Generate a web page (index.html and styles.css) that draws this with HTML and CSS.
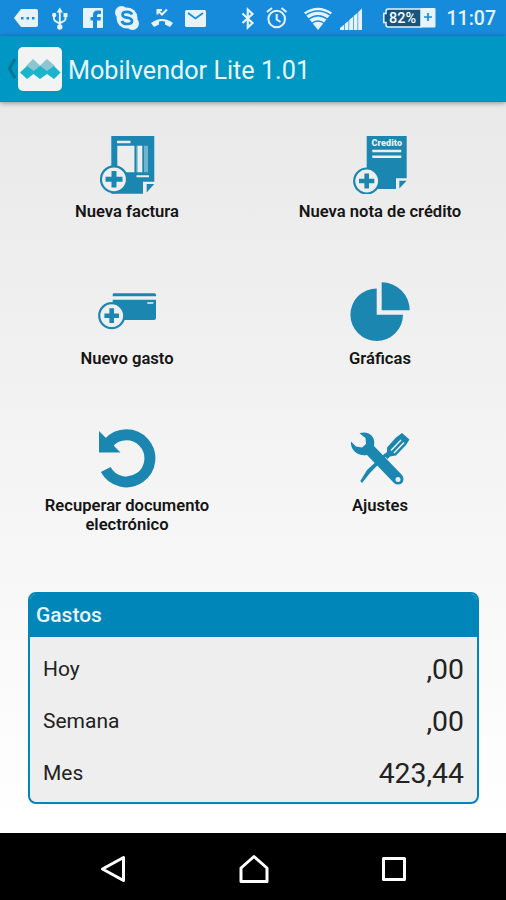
FILE: index.html
```
<!DOCTYPE html>
<html lang="es">
<head>
    <meta charset="UTF-8" />
    <meta name="viewport" content="width=device-width, initial-scale=1" />
    <title>Mobilvendor Lite</title>
    <link rel="stylesheet" href="styles.css">
</head>
<body>
    <div class="status-bar">
        <div class="status-left">
            <svg width="24" height="36" viewBox="14 0 24 36"><path fill="currentColor" d="M21 9H36Q38 9 38 11V25Q38 27 36 27H21L14 18Z"/><path class="cut" d="M21 17h2.500v2.500h-2.500zM26.500 17h2.500v2.500h-2.500zM32 17h2.500v2.500h-2.500z"/></svg>
            <svg width="17" height="36" viewBox="52 0 17 36" fill="none" stroke="currentColor" stroke-width="1.900"><path d="M59.800 11V27M54 15V19Q54 21 59.800 23.500M65.500 16V19Q65.500 21 59.800 23"/><path fill="currentColor" stroke="none" d="M56.500 12.500 59.800 7.500 63 12.500ZM63.500 13h4v4h-4z"/><circle cx="54.200" cy="15" r="2.200" fill="currentColor" stroke="none"/><circle cx="59.800" cy="27" r="2.700" fill="currentColor" stroke="none"/></svg>
            <svg width="20" height="36" viewBox="83 0 20 36"><rect x="83" y="8" width="20" height="20" rx="1" fill="currentColor"/><path class="cut" d="M93 28V20.500H90.500V17H93V15Q93 10.500 97.500 10.500H101V14H98.500Q97 14 97 15.500V17H101L100.500 20.500H97V28Z"/></svg>
            <svg width="24" height="36" viewBox="115 0 24 36"><g fill="currentColor"><circle cx="121.500" cy="12.500" r="6.500"/><circle cx="132.500" cy="23.500" r="6.500"/><circle cx="127" cy="18" r="10.500"/></g><path class="cut-line" d="M132 14.500Q131 11.800 127 11.800 122.500 11.800 122.500 14.500 122.500 17 127 17.700 132 18.500 132 21 132 24 127 24 122.800 24 121.800 21"/></svg>
            <svg width="22" height="36" viewBox="150 0 22 36"><path fill="currentColor" d="M150 23Q161 15 172 23L169 27 164 24.500V21.500Q161 20.500 158 21.500V24.500L153 27Z"/><path d="M156.500 14.500V10H161M157 10.500 161 14.500 166 9.500" fill="none" stroke="currentColor" stroke-width="2"/></svg>
            <svg width="21" height="36" viewBox="184 0 21 36"><rect x="184" y="10" width="21" height="17" rx="1.500" fill="currentColor"/><path class="cut-line thin" d="M187 13 194.500 18.500 202 13"/></svg>
        </div>
        <div class="status-right">
            <svg width="14" height="36" viewBox="241 0 14 36"><path d="M242.500 13.500 252.500 23 247.800 27.500V9.500L252.500 14 242.500 23" fill="none" stroke="currentColor" stroke-width="2.200"/></svg>
            <svg width="22" height="36" viewBox="265 0 22 36" fill="none" stroke="currentColor" stroke-width="2"><circle cx="275.700" cy="19" r="8.300"/><path d="M275.700 14V19.500L279.500 22M266 12 271 8M285.500 12 280.500 8"/></svg>
            <svg width="28" height="36" viewBox="303 0 28 36"><path fill="currentColor" d="M303 12.500Q317 3 331 12.500L317 30Z"/><path class="cut-line ring" d="M304 15.500Q317 6.500 330 15.500M307 19.500Q317 12 327 19.500M310.500 23.500Q317 18.500 323.500 23.500"/></svg>
            <svg width="22" height="36" viewBox="339 0 22 36"><path fill="currentColor" d="M339 30V28L343 24.800V30ZM343.700 30V24L347.500 20.800V30ZM348.200 30V20L352 16.800V30ZM352.700 30V16L356.500 12.800V30ZM357.200 30V12L361 8.500V30Z"/></svg>
            <svg width="53" height="36" viewBox="382 0 53 36"><path fill="#17557f" stroke="currentColor" stroke-width="1.500" d="M387 9H420V27H387Q385 27 385 24.500V22.500H382.800V13.500H385V11.500Q385 9 387 9Z"/><rect x="420" y="8" width="14.500" height="19.500" rx="1" fill="currentColor"/><path class="cut-line thin" d="M427 13V21M423 17H431"/><text class="battery-text" x="388" y="22.700" textLength="27" lengthAdjust="spacingAndGlyphs">82%</text></svg>
            <span class="clock">11:07</span>
        </div>
    </div>

    <header class="app-bar">
        <svg class="back" width="9" height="24" viewBox="0 0 9 24"><path d="M8 2 2.500 11.500 8 21" fill="none" stroke="#067493" stroke-width="3"/></svg>
        <div class="logo">
            <svg width="44" height="44" viewBox="0 0 44 44"><path fill="#8dc5d0" d="M8 19 15 12 22 18.500 29 12 37 19 29 26 22 20 15 26Z"/><path fill="#1bb5cb" d="M2 25.500 9 19 15.500 24 22 19 29 24 36 19 42.500 25.500 36 32 29 27 22 32 15.500 27 9 32Z"/></svg>
        </div>
        <h1>Mobilvendor Lite 1.01</h1>
    </header>

    <main>
        <div class="menu">
            <div class="menu-item">
                <svg class="icon" viewBox="0 0 60 60">
                    <path d="M14.300 2H57.300V59.700H14.300Z"/>
                    <path class="light" d="M20 6.700H33.500V9.300H20ZM20.300 11.700H37V38.300H20.300ZM40.300 11.700H45.300V38.300H40.300ZM39.500 41.200H52V43.200H39.500ZM46 47.700H58V60H46Z"/>
                    <path class="pale" d="M37 11.700H38V38.300H37ZM39.300 11.700H40.300V38.300H39.300ZM47 11.700H51V38.300H47Z"/>
                    <path d="M49.700 50H57.300L49.700 58.500Z"/>
                    <circle class="badge" cx="17" cy="45.300" r="13"/>
                    <path d="M14.500 37H19.500V42.800H25.500V47.800H19.500V53.600H14.500V47.800H8.500V42.800H14.500Z"/>
                </svg>
                <span>Nueva factura</span>
            </div>
            <div class="menu-item">
                <svg class="icon" viewBox="0 0 60 60">
                    <path d="M16.700 2H56.700V55H16.700Z"/>
                    <text class="credit-text" x="21.500" y="12.300" textLength="30.500">Credito</text>
                    <path class="light" d="M22.300 15.700H51.300V18.200H22.300ZM22.300 21.400H51.300V23.900H22.300ZM46 44.300H57V56H46Z"/>
                    <path d="M49.300 46.700H56.700L49.300 54.500Z"/>
                    <circle class="badge" cx="16.700" cy="47" r="12.500"/>
                    <path d="M14.400 39.500H19V44.700H24.300V49.300H19V54.500H14.400V49.300H9V44.700H14.400Z"/>
                </svg>
                <span>Nueva nota de crédito</span>
            </div>
            <div class="menu-item">
                <svg class="icon" viewBox="0 0 60 60">
                    <path d="M17 12.300H57.500Q59 12.300 59 13.800V15.300H15.700V13.600Q15.700 12.300 17 12.300ZM15.700 18.700H59V37Q59 39 57 39H15.700Z"/>
                    <path class="light" d="M50.300 21.200H56.300V22.800H50.300Z"/>
                    <circle class="badge" cx="14.700" cy="34.700" r="12.500"/>
                    <path d="M12.400 27.300H17V32.400H22V37H17V42.100H12.400V37H7.400V32.400H12.400Z"/>
                </svg>
                <span>Nuevo gasto</span>
            </div>
            <div class="menu-item">
                <svg class="icon" viewBox="0 0 60 60">
                    <path d="M26.700 7.400V33.700H53A26.300 26.300 0 1 1 26.700 7.400Z"/>
                    <path d="M31.700 1.300A28 28 0 0 1 59.700 29.300H31.700Z"/>
                </svg>
                <span>Gráficas</span>
            </div>
            <div class="menu-item">
                <svg class="icon" viewBox="0 0 60 60">
                    <path d="M8.700 41.500A23.500 23.500 0 1 0 11.700 14.900" fill="none" stroke="#1b87b1" stroke-width="11"/>
                    <path d="M2 3 23.500 24.500H2Z"/>
                </svg>
                <span>Recuperar documento electrónico</span>
            </div>
            <div class="menu-item">
                <svg class="icon" viewBox="0 0 60 60">
                    <path d="M10.300 53 17 42 35 25.500 37 27.500 20 45 12 55Z"/>
                    <path d="M52 5 59.500 11.500 56 17 46 27.500 40 28.500 37.500 31 33.500 27 37 24V19.500L46 9.500Z"/>
                    <path d="M41 22.500 51 12M44 25 54 14.500" fill="none" stroke="#f4f4f4" stroke-width="1.400"/>
                    <path d="M9.500 5.200C19 2.500 26 9 24 18L51.500 46.500C57 53 50 59.500 44 55L17 27C8 28.500 0 22 1 13.500L6 18.500 12 19.500 16 16 15.500 10Z"/>
                    <circle class="light" cx="48" cy="51.500" r="2.500"/>
                </svg>
                <span>Ajustes</span>
            </div>
        </div>

        <section class="expenses">
            <h2>Gastos</h2>
            <div class="row"><span>Hoy</span><span class="amount">,00</span></div>
            <div class="row"><span>Semana</span><span class="amount">,00</span></div>
            <div class="row"><span>Mes</span><span class="amount">423,44</span></div>
        </section>
    </main>

    <footer class="nav-bar">
        <svg width="26" height="30" viewBox="0 0 26 30"><path d="M23.500 3.500V26.500L2.500 15Z"/></svg>
        <svg width="30" height="30" viewBox="0 0 30 30"><path d="M15 2.500 28 14V27.500H2V14Z"/></svg>
        <svg width="26" height="30" viewBox="0 0 26 30"><path d="M2.500 4.500H23.500V25.500H2.500Z"/></svg>
    </footer>
</body>
</html>
```
FILE: styles.css
```
body {
    margin: 0;
    height: 900px;
    overflow: hidden;
    display: flex;
    flex-direction: column;
    font-family: Roboto, "Liberation Sans", sans-serif;
    background-color: #fff;
}
svg {
    display: block;
    flex-shrink: 0;
}

/* status bar */
.status-bar {
    height: 36px;
    background-color: #178bdb;
    color: #e6f3fc;
    display: flex;
    justify-content: space-between;
    padding: 0 10px 0 14px;
    flex-shrink: 0;
}
.status-left {
    display: flex;
    gap: 12px;
}
.status-left svg:nth-child(2) {
    margin: 0 2px;
}
.status-right {
    display: flex;
    align-items: center;
}
.status-right svg {
    margin-right: 11px;
}
.status-right svg:nth-child(2) {
    margin-right: 16px;
}
.status-right svg:nth-child(3) {
    margin-right: 8px;
}
.status-right svg:nth-child(4) {
    margin-right: 21px;
}
.clock {
    font-size: 19.5px;
    font-weight: 500;
    line-height: 36px;
    padding-top: 2px;
}
.cut {
    fill: #178bdb;
}
.cut-line {
    fill: none;
    stroke: #178bdb;
    stroke-width: 2.7;
}
.thin {
    stroke-width: 1.7;
}
.ring {
    stroke-width: 1.5;
}
.battery-text {
    font-size: 14px;
    font-weight: 500;
    fill: #fff;
}

/* app bar */
.app-bar {
    height: 66px;
    box-sizing: border-box;
    background-color: #0097c4;
    border-bottom: 1px solid #1687a9;
    box-shadow: 0 1px 5px rgba(0, 0, 0, 0.4);
    display: flex;
    align-items: center;
    padding-left: 7px;
    flex-shrink: 0;
    position: relative;
}
.logo {
    width: 44px;
    height: 44px;
    margin: 0 6px 0 2px;
    border-radius: 5px;
    background-color: #f2f4f4;
}
h1 {
    margin: 0;
    padding-top: 4px;
    color: #e8f6fb;
    font-size: 25.2px;
    font-weight: 400;
}

main {
    height: 731px;
    box-sizing: border-box;
    padding-top: 32px;
    background: linear-gradient(#e9e9e9, #fff);
}
.menu {
    display: grid;
    grid-template-columns: 1fr 1fr;
    grid-auto-rows: 147px;
}
.menu-item {
    display: flex;
    flex-direction: column;
    align-items: center;
    padding-left: 1px;
}
.menu-item span {
    width: 190px;
    margin-top: 8px;
    text-align: center;
    font-size: 16.6px;
    font-weight: 600;
    line-height: 19px;
    color: #151515;
}
.icon {
    width: 60px;
    height: 60px;
    fill: #1b87b1;
}
.icon .light {
    fill: #ededed;
}
.icon .pale {
    fill: #72b3ce;
}
.badge {
    fill: #eee;
    stroke: #1b87b1;
    stroke-width: 2.2;
}
.credit-text {
    font-size: 9px;
    font-weight: 900;
    fill: #eee;
}

/* expenses box */
.expenses {
    width: 451px;
    height: 212px;
    box-sizing: border-box;
    margin: 17px 0 0 28px;
    border: 2.5px solid #0086b8;
    border-radius: 8px;
    background-color: #eee;
    overflow: hidden;
}
.expenses h2 {
    margin: 0 0 6px;
    padding-left: 6px;
    height: 43px;
    line-height: 42px;
    background-color: #0086b8;
    color: #e8f6fb;
    font-size: 21px;
    font-weight: 500;
}
.row {
    display: flex;
    justify-content: space-between;
    align-items: center;
    height: 52px;
    padding: 0 13px;
    font-size: 21px;
    color: #222;
}
.amount {
    font-size: 28.4px;
}

/* navigation buttons */
.nav-bar {
    height: 67px;
    background-color: #000;
    display: flex;
    align-items: center;
    justify-content: space-between;
    padding: 4px 99px 0 100px;
    box-sizing: border-box;
}
.nav-bar svg {
    fill: none;
    stroke: #fff;
    stroke-width: 3;
    stroke-linejoin: round;
}
```
